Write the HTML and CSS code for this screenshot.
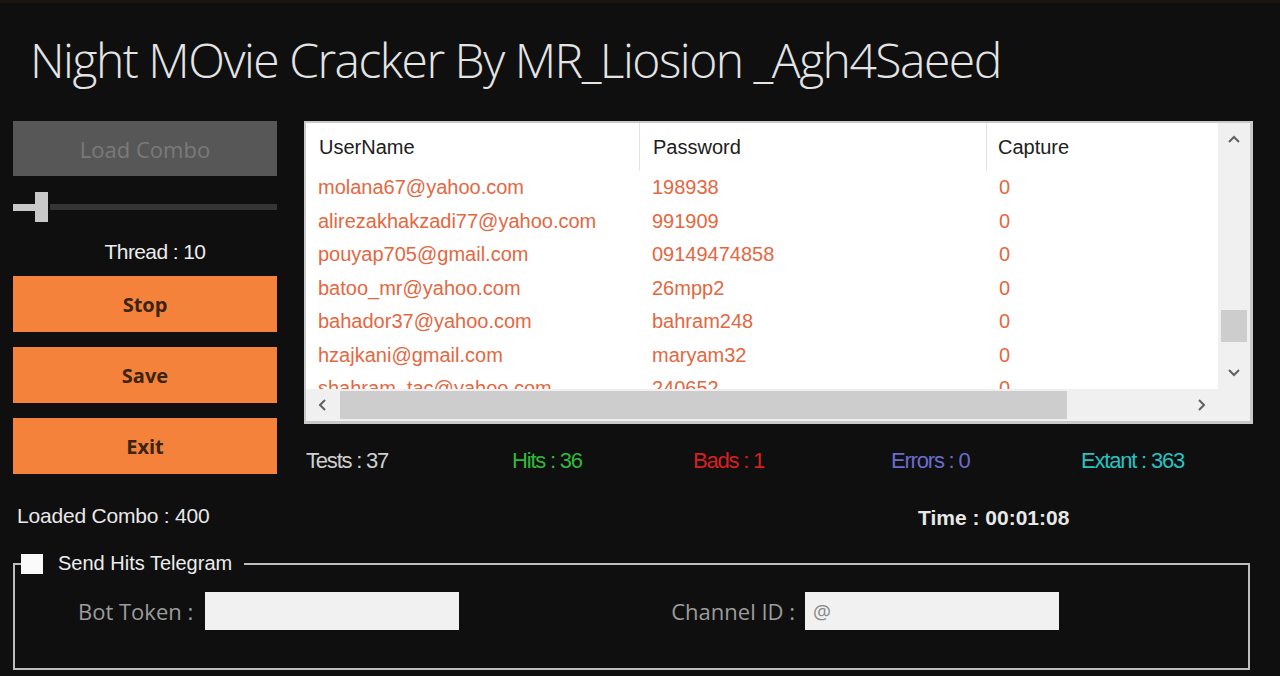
FILE: index.html
```html
<!DOCTYPE html>
<html lang="en">
	<head>
		<meta charset="UTF-8" />
		<meta name="viewport" content="width=device-width, initial-scale=1.0" />
		<title>Night MOvie Cracker</title>
		<link rel="stylesheet" href="styles.css">
	</head>
	<body>
		<div class="app">
			<h1 class="title">Night MOvie Cracker By MR_Liosion _Agh4Saeed</h1>

			<div class="main">
				<div class="side">
					<button class="btn btn-load">Load Combo</button>
					<div class="slider">
						<span class="slider-fill"></span>
						<span class="slider-thumb"></span>
						<span class="slider-track"></span>
					</div>
					<div class="thread">Thread : 10</div>
					<button class="btn btn-action">Stop</button>
					<button class="btn btn-action">Save</button>
					<button class="btn btn-action">Exit</button>
					<div class="loaded">Loaded Combo : 400</div>
				</div>

				<div class="content">
					<div class="grid">
						<div class="grid-body">
							<div class="grid-row grid-head">
								<div class="cell col-user">UserName</div>
								<div class="cell col-pass">Password</div>
								<div class="cell col-cap">Capture</div>
							</div>
							<div id="rows"></div>
						</div>
						<div class="vscroll">
							<div class="scroll-btn">
								<svg width="12" height="8" viewBox="0 0 12 8"><polyline points="1,7 6,2 11,7" fill="none" stroke="#606060" stroke-width="2"/></svg>
							</div>
							<div class="vtrack"><div class="vthumb"></div></div>
							<div class="scroll-btn">
								<svg width="12" height="8" viewBox="0 0 12 8"><polyline points="1,1 6,6 11,1" fill="none" stroke="#606060" stroke-width="2"/></svg>
							</div>
						</div>
						<div class="hscroll">
							<div class="scroll-btn">
								<svg width="8" height="12" viewBox="0 0 8 12"><polyline points="7,1 2,6 7,11" fill="none" stroke="#606060" stroke-width="2"/></svg>
							</div>
							<div class="htrack"><div class="hthumb"></div></div>
							<div class="scroll-btn">
								<svg width="8" height="12" viewBox="0 0 8 12"><polyline points="1,1 6,6 1,11" fill="none" stroke="#606060" stroke-width="2"/></svg>
							</div>
						</div>
						<div class="corner"></div>
					</div>

					<div class="stats">
						<span class="stat tests">Tests : 37</span>
						<span class="stat hits">Hits : 36</span>
						<span class="stat bads">Bads : 1</span>
						<span class="stat errors">Errors : 0</span>
						<span class="stat extant">Extant : 363</span>
					</div>
					<div class="time">Time : 00:01:08</div>
				</div>
			</div>

			<fieldset class="telegram">
				<legend class="telegram-legend">
					<input type="checkbox" class="check" />
					<span>Send Hits Telegram</span>
				</legend>
				<div class="telegram-row">
					<label class="field">
						<span class="field-label">Bot Token :</span>
						<input type="text" class="field-input" />
					</label>
					<label class="field field-channel">
						<span class="field-label">Channel ID :</span>
						<input type="text" class="field-input" value="@" />
					</label>
				</div>
			</fieldset>
		</div>

		<script>
			const results = [
				["molana67@yahoo.com", "198938", "0"],
				["alirezakhakzadi77@yahoo.com", "991909", "0"],
				["pouyap705@gmail.com", "09149474858", "0"],
				["batoo_mr@yahoo.com", "26mpp2", "0"],
				["bahador37@yahoo.com", "bahram248", "0"],
				["hzajkani@gmail.com", "maryam32", "0"],
				["shahram_tac@yahoo.com", "240652", "0"],
			];

			const rows = document.getElementById("rows");
			results.forEach((r) => {
				const row = document.createElement("div");
				row.className = "grid-row";
				row.innerHTML = `
					<div class="cell col-user">${r[0]}</div>
					<div class="cell col-pass">${r[1]}</div>
					<div class="cell col-cap">${r[2]}</div>
				`;
				rows.appendChild(row);
			});
		</script>
	</body>
</html>
```

FILE: styles.css
```css
:root {
	--bg-color: #0f0f0f;
	--orange: #f5823a;
	--orange-text: #3a2414;
	--grid-text: #e4673f;
	--scroll-bg: #f0f0f0;
	--scroll-thumb: #cdcdcd;
	--frame: #bdbdbd;
}
body {
	margin: 0;
	background-color: var(--bg-color);
	color: #e6e6e6;
	font-family: "Liberation Sans", Arial, sans-serif;
	border-top: 3px solid #1c150f;
	height: 673px;
	overflow: hidden;
}
.app {
	padding: 0 13px;
}
.title {
	margin: 25px 0 0 17px;
	height: 64px;
	line-height: 64px;
	font-family: "Open Sans", sans-serif;
	font-weight: 300;
	font-size: 48px;
	letter-spacing: -1.5px;
	color: #e4e4e4;
	white-space: nowrap;
}
.main {
	display: flex;
	gap: 27px;
	margin-top: 29px;
}

/* left column */
.side {
	width: 264px;
	display: flex;
	flex-direction: column;
}
.btn {
	border: none;
	padding: 0;
	margin: 0;
	width: 100%;
	height: 56px;
	cursor: pointer;
	font-family: "Open Sans", sans-serif;
}
.btn-load {
	height: 55px;
	background-color: #575757;
	color: #7a7a7a;
	font-size: 22px;
}
.btn-action {
	background-color: var(--orange);
	color: var(--orange-text);
	font-size: 20px;
	font-weight: 700;
	margin-bottom: 15px;
}
.slider {
	display: flex;
	align-items: center;
	height: 30px;
	margin-top: 16px;
}
.slider-fill {
	width: 22px;
	height: 7px;
	background-color: #c8c8c8;
}
.slider-thumb {
	width: 13px;
	height: 30px;
	background-color: #c8c8c8;
}
.slider-track {
	flex-grow: 1;
	height: 6px;
	margin-left: 2px;
	background-color: #353535;
}
.thread {
	margin: 18px 0 12px;
	padding-left: 20px;
	height: 24px;
	line-height: 24px;
	text-align: center;
	font-size: 21px;
	letter-spacing: -0.6px;
	color: #ececec;
}
.loaded {
	margin: 15px 0 0 4px;
	height: 24px;
	line-height: 24px;
	font-size: 21px;
	letter-spacing: -0.2px;
	color: #e8e8e8;
}

/* results grid */
.content {
	width: 949px;
}
.grid {
	display: grid;
	grid-template-columns: 912px 32px;
	grid-template-rows: 266px 32px;
	border: 2px solid #c9c9c9;
	border-right-width: 3px;
	border-bottom-width: 3px;
	background-color: #fff;
}
.grid-body {
	overflow: hidden;
}
.grid-row {
	display: flex;
	height: 33.5px;
	align-items: center;
	font-size: 20px;
	color: var(--grid-text);
	white-space: nowrap;
}
.grid-head {
	height: 48px;
	color: #202020;
}
.cell {
	box-sizing: border-box;
	height: 100%;
	display: flex;
	align-items: center;
}
.col-user {
	width: 334px;
	padding-left: 12px;
}
.col-pass {
	width: 347px;
	padding-left: 12px;
}
.col-cap {
	flex-grow: 1;
	padding-left: 12px;
}
.grid-head .col-user,
.grid-head .col-pass {
	border-right: 1px solid #e3e3e3;
	padding-left: 13px;
}
.grid-head .col-cap {
	padding-left: 11px;
}
.vscroll {
	display: flex;
	flex-direction: column;
	background-color: var(--scroll-bg);
}
.hscroll {
	display: flex;
	background-color: var(--scroll-bg);
}
.scroll-btn {
	width: 32px;
	height: 32px;
	flex-shrink: 0;
	display: flex;
	align-items: center;
	justify-content: center;
}
.vtrack {
	flex-grow: 1;
	padding: 0 3px;
}
.vthumb {
	margin-top: 155px;
	height: 32px;
	background-color: var(--scroll-thumb);
}
.htrack {
	flex-grow: 1;
	padding: 2px 0;
}
.hthumb {
	margin-left: 2px;
	width: 727px;
	height: 28px;
	background-color: var(--scroll-thumb);
}
.corner {
	background-color: var(--scroll-bg);
}

/* counters */
.stats {
	display: grid;
	grid-template-columns: 206px 181px 198px 190px auto;
	margin-top: 25px;
	padding-left: 2px;
	height: 24px;
	line-height: 24px;
	font-size: 22px;
	letter-spacing: -1.2px;
}
.tests {
	color: #cfcfcf;
}
.hits {
	color: #2fb83c;
}
.bads {
	color: #d81f1f;
}
.errors {
	color: #6c6ccc;
}
.extant {
	color: #27c2c2;
}
.time {
	margin: 33px 0 0 614px;
	height: 24px;
	line-height: 24px;
	font-size: 21px;
	font-weight: 700;
	letter-spacing: 0;
	color: #e8e8e8;
}

/* telegram group */
.telegram {
	margin: 22px 0 0;
	width: 1237px;
	box-sizing: border-box;
	border: 2px solid var(--frame);
	padding: 17px 0 38px 0;
}
.telegram-legend {
	display: flex;
	align-items: center;
	margin-left: 6px;
	padding: 0 12px 0 0;
	font-size: 20px;
	letter-spacing: 0;
	color: #ececec;
}
.check {
	appearance: none;
	width: 22px;
	height: 20px;
	margin: 0 15px 0 0;
	background-color: #fafafa;
	border: none;
}
.telegram-row {
	display: flex;
	margin-left: 63px;
}
.field {
	display: flex;
	align-items: center;
	gap: 12px;
}
.field-channel {
	margin-left: 212px;
	gap: 10px;
}
.field-label {
	font-family: "Open Sans", sans-serif;
	font-size: 22px;
	color: #9c9c9c;
}
.field-input {
	width: 254px;
	height: 38px;
	box-sizing: border-box;
	border: none;
	background-color: #f1f1f1;
	padding: 0 8px;
	font-family: "Open Sans", sans-serif;
	font-size: 20px;
	color: #8a8a8a;
}
```
